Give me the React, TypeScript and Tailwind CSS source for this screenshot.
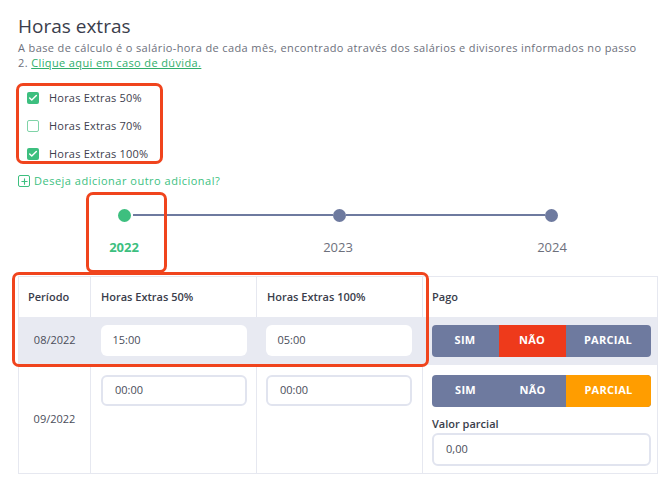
import { Check, Plus } from 'lucide-react';

const font = { fontFamily: '"Open Sans", "DejaVu Sans", sans-serif' };

const Checkbox = ({ checked, label }: { checked: boolean; label: string }) => (
  <div className="flex items-center gap-[10px] h-[14px]">
    {checked ? (
      <span className="w-[12px] h-[12px] rounded-[2px] bg-[#3dbf7f] flex items-center justify-center">
        <Check size={10} strokeWidth={3.5} className="text-white" />
      </span>
    ) : (
      <span className="w-[12px] h-[12px] rounded-[2px] border-[1.5px] border-[#7fd3a7] bg-white" />
    )}
    <span className="text-[11px] tracking-[0.2px] text-[#3d404d]">{label}</span>
  </div>
);

const PayToggle = ({ active }: { active: 'SIM' | 'NÃO' | 'PARCIAL' }) => {
  const opts = [
    { k: 'SIM', w: 'w-[67px]' },
    { k: 'NÃO', w: 'w-[67px]' },
    { k: 'PARCIAL', w: 'flex-1' }
  ];
  return (
    <div className="flex h-[32px] w-[219px] rounded-[4px] overflow-hidden bg-[#6e7a9f]">
      {opts.map((o) => (
        <div
          key={o.k}
          className={`${o.w} flex items-center justify-center text-[11px] font-bold text-white tracking-wide ${
            active === o.k ? (o.k === 'NÃO' ? 'bg-[#ee3a1b]' : o.k === 'PARCIAL' ? 'bg-[#ff9d00]' : '') : ''
          }`}
        >
          {o.k}
        </div>
      ))}
    </div>
  );
};

const TimeInput = ({ value, bordered }: { value: string; bordered?: boolean }) => (
  <div
    className={`w-[146px] h-[31px] rounded-[6px] bg-white flex items-center px-[12px] text-[11px] text-[#4a4d5a] ${
      bordered ? 'border-2 border-[#e1e4ef]' : ''
    }`}
  >
    {value}
  </div>
);

export default function App() {
  return (
    <div className="relative w-[670px] h-[477px] bg-white overflow-hidden" style={font}>
      <div className="pl-[18px] pt-[14px] pr-[12px]">
        <h1 className="text-[19px] leading-[24px] font-medium text-[#3a3d4b]">Horas extras</h1>
        <p className="text-[11px] leading-[15px] text-[#6d707c] mt-[2px] tracking-[0.38px] whitespace-nowrap">
          A base de cálculo é o salário-hora de cada mês, encontrado através dos salários e divisores informados no passo
          <br />
          2. <span className="text-[#2fae6b] underline">Clique aqui em caso de dúvida.</span>
        </p>

        <div className="mt-[21px] ml-[9px] flex flex-col gap-[14px]">
          <Checkbox checked label="Horas Extras 50%" />
          <Checkbox checked={false} label="Horas Extras 70%" />
          <Checkbox checked label="Horas Extras 100%" />
        </div>

        <div className="mt-[12px] flex items-center gap-[4px] text-[11px] tracking-[0.5px] text-[#3dbf7f]">
          <span className="w-[12px] h-[12px] rounded-[2px] border-[1.5px] border-[#3dbf7f] flex items-center justify-center">
            <Plus size={9} strokeWidth={3} />
          </span>
          <span>Deseja adicionar outro adicional?</span>
        </div>

        {/* timeline */}
        <div className="mt-[19px] ml-[100px] w-[440px] flex items-center">
          <span className="w-[13px] h-[13px] rounded-full bg-[#3dbf7f]" />
          <span className="flex-1 h-[2px] bg-[#6e7a9f] ml-[2px]" />
          <span className="w-[13px] h-[13px] rounded-full bg-[#6e7a9f]" />
          <span className="flex-1 h-[2px] bg-[#6e7a9f]" />
          <span className="w-[13px] h-[13px] rounded-full bg-[#6e7a9f]" />
        </div>
        <div className="mt-[16px] ml-[-1px] grid grid-cols-3 w-[642px] text-center text-[13px]">
          <span className="font-bold text-[#3dbf7f]">2022</span>
          <span className="text-[#6d707c]">2023</span>
          <span className="text-[#6d707c]">2024</span>
        </div>

        {/* table */}
        <table className="mt-[19px] w-[640px] border-collapse border border-[#e6e8f0] text-[11px]">
          <colgroup>
            <col className="w-[72px]" />
            <col className="w-[166px]" />
            <col className="w-[166px]" />
            <col />
          </colgroup>
          <thead>
            <tr className="h-[40px] text-left text-[#3a3d4b]">
              <th className="font-semibold pl-[9px] border-r border-[#e6e8f0]">Período</th>
              <th className="font-semibold pl-[10px] border-r border-[#e6e8f0]">Horas Extras 50%</th>
              <th className="font-semibold pl-[10px] border-r border-[#e6e8f0]">Horas Extras 100%</th>
              <th className="font-semibold pl-[9px]">Pago</th>
            </tr>
          </thead>
          <tbody>
            <tr className="h-[48px] bg-[#e8eaf2] text-[#4a4d5a]">
              <td className="text-center">08/2022</td>
              <td className="pl-[10px]">
                <TimeInput value="15:00" />
              </td>
              <td className="pl-[9px]">
                <TimeInput value="05:00" />
              </td>
              <td className="pl-[9px]">
                <PayToggle active="NÃO" />
              </td>
            </tr>
            <tr className="h-[109px] text-[#4a4d5a] align-top">
              <td className="text-center align-middle border-r border-[#e6e8f0]">09/2022</td>
              <td className="pl-[10px] pt-[10px] border-r border-[#e6e8f0]">
                <TimeInput value="00:00" bordered />
              </td>
              <td className="pl-[9px] pt-[10px] border-r border-[#e6e8f0]">
                <TimeInput value="00:00" bordered />
              </td>
              <td className="pl-[9px] pt-[10px]">
                <PayToggle active="PARCIAL" />
                <div className="mt-[9px] text-[11px] font-semibold text-[#3a3d4b]">Valor parcial</div>
                <div className="mt-[1px] w-[219px] h-[33px] rounded-[6px] border-2 border-[#e1e4ef] flex items-center px-[12px] text-[#4a4d5a]">
                  0,00
                </div>
              </td>
            </tr>
          </tbody>
        </table>
      </div>

      {/* annotation outlines */}
      <div className="absolute left-[16px] top-[83px] w-[147px] h-[81px] rounded-[7px] border-[3px] border-[#f0441d] pointer-events-none" />
      <div className="absolute left-[86px] top-[192px] w-[81px] h-[81px] rounded-[7px] border-[3px] border-[#f0441d] pointer-events-none" />
      <div className="absolute left-[12px] top-[272px] w-[417px] h-[95px] rounded-[7px] border-[3px] border-[#f0441d] pointer-events-none" />
    </div>
  );
}
